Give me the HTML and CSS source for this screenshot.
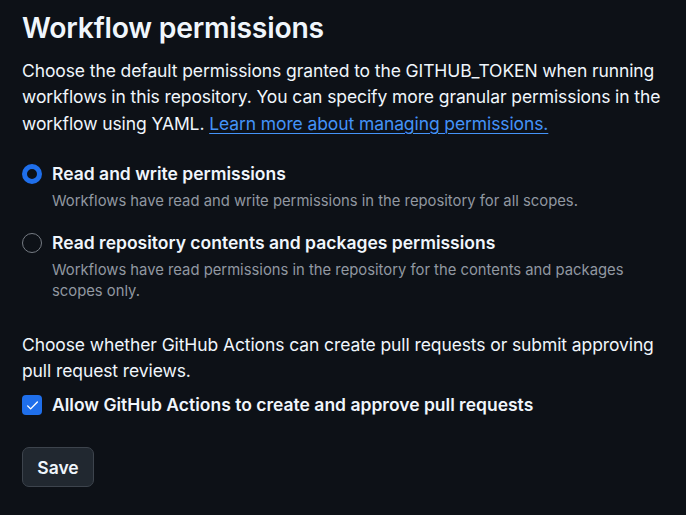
FILE: index.html
```html
<!DOCTYPE html>
<html lang="en">
  <head>
    <meta charset="UTF-8" />
    <title>Workflow permissions</title>
    <link rel="stylesheet" href="styles.css">
  </head>
  <body>
    <form class="settings">
      <h2 class="title">Workflow permissions</h2>
      <p class="note">
        Choose the default permissions granted to the GITHUB_TOKEN when running
        workflows in this repository. You can specify more granular permissions in the
        workflow using YAML. <a href="#">Learn more about managing permissions.</a>
      </p>

      <div class="options">
        <label class="option">
          <span class="radio checked"></span>
          <span class="option-body">
            <span class="option-title">Read and write permissions</span>
            <span class="option-desc">Workflows have read and write permissions in the repository for all scopes.</span>
          </span>
        </label>
        <label class="option">
          <span class="radio"></span>
          <span class="option-body">
            <span class="option-title">Read repository contents and packages permissions</span>
            <span class="option-desc">Workflows have read permissions in the repository for the contents and packages scopes only.</span>
          </span>
        </label>
      </div>

      <p class="note second">
        Choose whether GitHub Actions can create pull requests or submit approving
        pull request reviews.
      </p>
      <label class="check-row">
        <span class="checkbox">
          <svg viewBox="0 0 16 16" width="15" height="15"><path d="M2.8 8.4l3.2 3.2 7.2-7.4" fill="none" stroke="#fff" stroke-width="1.5" stroke-linecap="round" stroke-linejoin="round"/></svg>
        </span>
        <span class="option-title">Allow GitHub Actions to create and approve pull requests</span>
      </label>

      <button type="button" class="btn">Save</button>
    </form>
  </body>
</html>
```

FILE: styles.css
```css
body {
  margin: 0;
  background-color: #0d1117;
  color: #f0f6fc;
  font-family: Inter, "Noto Sans", sans-serif;
  font-size: 17.5px;
}
.settings {
  padding: 10px 10px 0 22px;
  width: 686px;
  box-sizing: border-box;
}
.title {
  margin: 0 0 12px;
  font-size: 28.3px;
  font-weight: 600;
  line-height: 36px;
  letter-spacing: -0.2px;
}
.note {
  margin: 0;
  line-height: 26.25px;
  letter-spacing: -0.1px;
}
.note a {
  color: #4493f8;
  text-decoration: underline;
  text-underline-offset: 3px;
  text-decoration-thickness: 1px;
}
.options {
  display: flex;
  flex-direction: column;
  gap: 20px;
  margin: 26px 0 30px;
}
.option,
.check-row {
  display: flex;
  align-items: flex-start;
  gap: 10px;
}
.option-body {
  display: flex;
  flex-direction: column;
  gap: 6px;
}
.option-title {
  font-weight: 600;
  line-height: 22px;
}
.option-desc {
  max-width: 600px;
  color: #9198a1;
  font-size: 14.8px;
  line-height: 21px;
}
.radio {
  flex: none;
  width: 20px;
  height: 20px;
  margin-top: 1px;
  border: 1px solid #757b83;
  border-radius: 50%;
  box-sizing: border-box;
}
.radio.checked {
  border: 5px solid #1f6feb;
}
.second {
  margin-bottom: 10px;
}
.checkbox {
  flex: none;
  width: 20px;
  height: 20px;
  margin-top: 1px;
  border-radius: 4px;
  background-color: #1f6feb;
  display: flex;
  align-items: center;
  justify-content: center;
}
.btn {
  margin-top: 31px;
  width: 72px;
  height: 40px;
  font-family: inherit;
  font-size: 17.5px;
  font-weight: 600;
  color: #f0f6fc;
  background-color: #212830;
  border: 1px solid #3d444d;
  border-radius: 7px;
}
```
